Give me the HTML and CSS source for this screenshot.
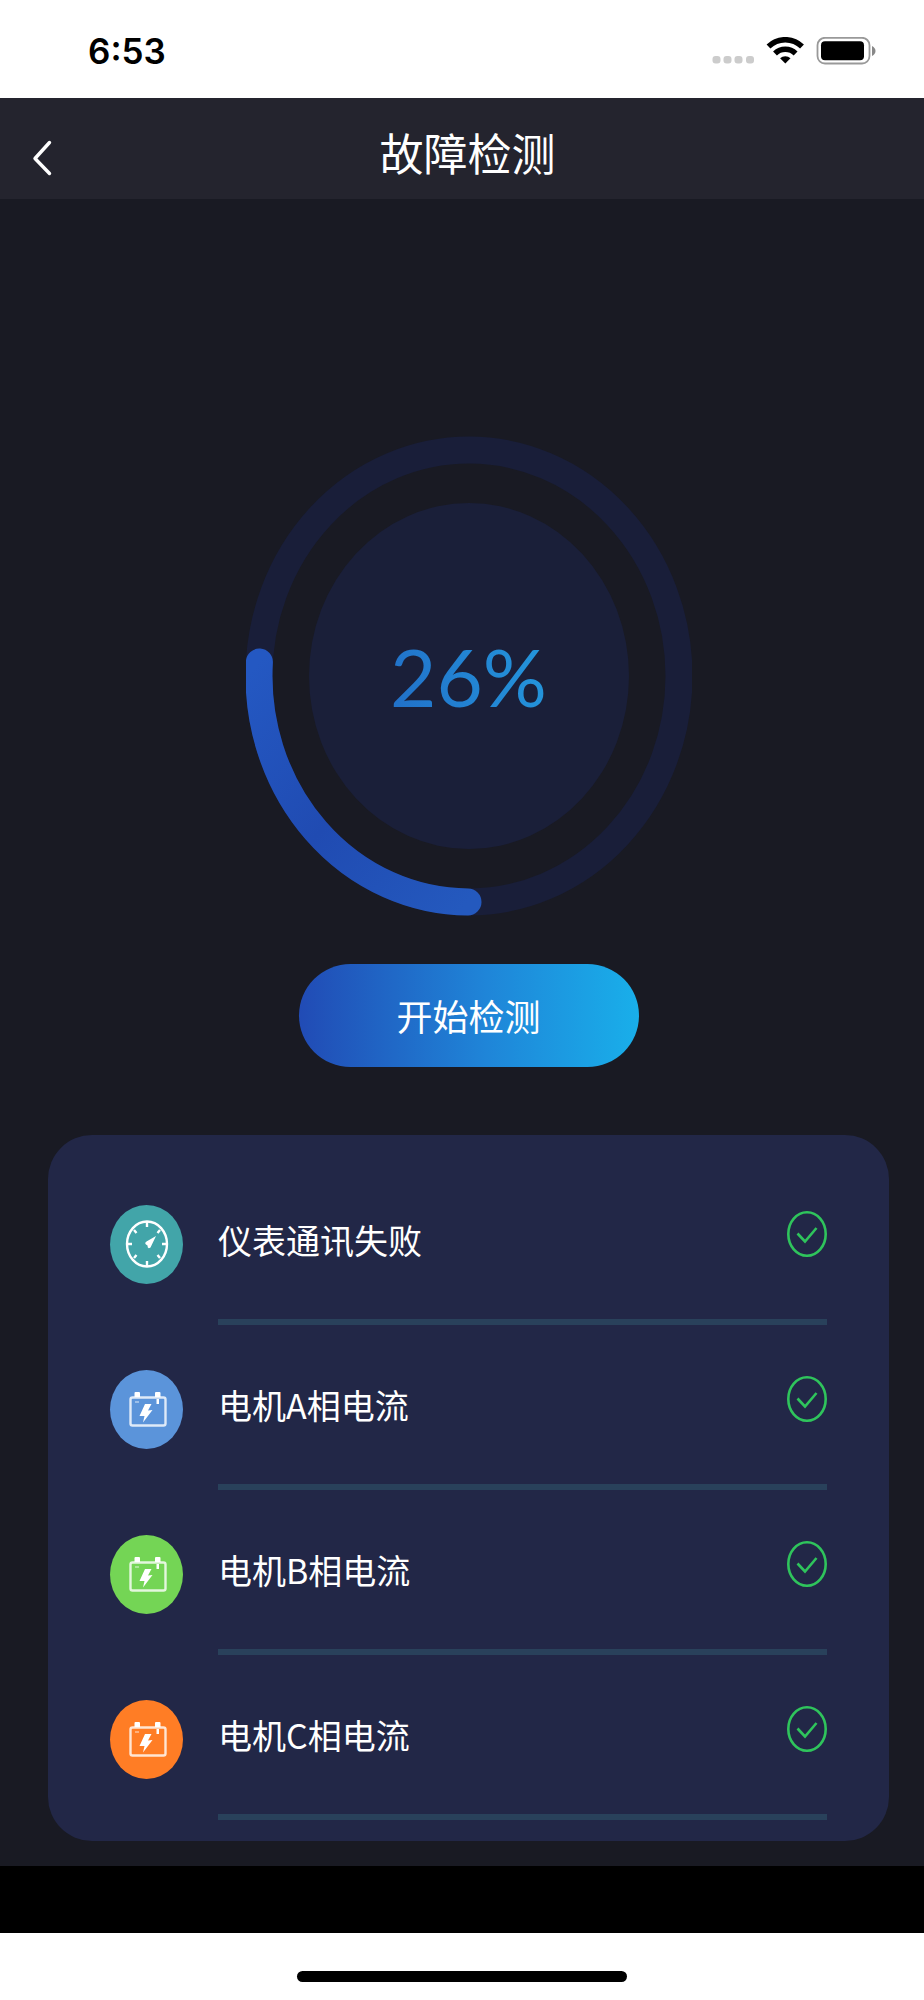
FILE: index.html
```html
<!DOCTYPE html>
<html lang="zh-CN">
<head>
<meta charset="utf-8">
<meta name="viewport" content="width=device-width, initial-scale=1">
<title>故障检测</title>
<link rel="stylesheet" href="styles.css">
</head>
<body>
<svg class="defs" aria-hidden="true">
  <symbol id="battery" viewBox="0 0 73 79">
    <rect x="20.500" y="27.500" width="35" height="28" rx="2" fill="none" stroke="#fff" stroke-opacity=".8" stroke-width="2.400"/>
    <path d="M24.500 27v-4q0-1 1-1h3.500q1 0 1 1v4zM45 27v-4q0-1 1-1h3.500q1 0 1 1v4zM46.500 29h2.500v5h-2.500z" fill="#fff"/>
    <path d="M25 31h4v2h-4z" fill="#fff" fill-opacity=".4"/>
    <path d="M35 34h6.500l-3.500 6.500 4.500-.5-9.500 12.500 1.500-6.500h-5z" fill="#fff"/>
  </symbol>
  <symbol id="check" viewBox="0 0 40 46">
    <ellipse cx="20" cy="23" rx="18.700" ry="21.700" fill="none" stroke="#2fc45c" stroke-width="2.600"/>
    <path d="M10.500 22.500l7.500 8L29.500 17" fill="none" stroke="#2fc45c" stroke-width="2.600"/>
  </symbol>
</svg>

<div class="status">
  <span class="time">6:53</span>
  <svg class="status-icons" viewBox="0 0 164 28" aria-hidden="true">
    <g fill="#ccc">
      <rect x="0.500" y="19" width="8" height="7.500" rx="3"/>
      <rect x="11.500" y="19" width="8" height="7.500" rx="3"/>
      <rect x="22.500" y="19" width="8" height="7.500" rx="3"/>
      <rect x="34" y="19" width="8" height="7.500" rx="3"/>
    </g>
    <g fill="none" stroke="#000" stroke-width="5.500">
      <path d="M56.500 9.500a24 24 0 0 1 33.500 0"/>
      <path d="M63 16.500a14.700 14.700 0 0 1 20.600 0"/>
    </g>
    <path d="M73.300 26.500l-5.200-5.200a7.500 7.500 0 0 1 10.400 0z"/>
    <rect x="105.500" y="0.800" width="52" height="25.700" rx="7.500" fill="none" stroke="#999" stroke-width="1.800"/>
    <rect x="109" y="4.300" width="43" height="19" rx="4"/>
    <path d="M160 9q3.500 2 3.500 5t-3.500 5z" fill="#888"/>
  </svg>
</div>

<header class="header">
  <button class="back" type="button" aria-label="返回">
    <svg viewBox="0 0 18 34" aria-hidden="true"><path d="M16.500 1.500L2 17.500l14.500 15" fill="none" stroke="#fff" stroke-width="3.400" stroke-linecap="round" stroke-linejoin="round"/></svg>
  </button>
  <h1 class="title">故障检测</h1>
</header>

<main class="main">
  <div class="gauge">
    <svg class="ring" viewBox="0 0 446 480" aria-hidden="true">
      <defs>
        <linearGradient id="arc" x1="0" y1="0" x2="1" y2="1">
          <stop offset="0" stop-color="#2458c2"/>
          <stop offset=".5" stop-color="#204bb2"/>
          <stop offset="1" stop-color="#2459be"/>
        </linearGradient>
      </defs>
      <ellipse cx="223" cy="240" rx="210" ry="226" fill="none" stroke="#191e39" stroke-width="27"/>
      <ellipse cx="223" cy="240" rx="160" ry="173" fill="#1a1f39"/>
      <path d="M13.400 226A210 226 0 0 0 222 466" fill="none" stroke="url(#arc)" stroke-width="27" stroke-linecap="round"/>
    </svg>
    <span class="percent">26%</span>
  </div>

  <button class="start" type="button">开始检测</button>

  <ul class="card">
    <li class="row">
      <svg class="icon teal" viewBox="0 0 73 79" aria-hidden="true">
        <ellipse cx="37" cy="39" rx="20" ry="22.500" fill="none" stroke="#fff" stroke-width="2.400"/>
        <path d="M37 17v5M37 56v5M17 39h5M52 39h5M24 25l2.500 3M50 25l-2.500 3M24 53l2.500-3M50 53l-2.500-3" stroke="#fff" stroke-width="2.400"/>
        <path d="M46 31l-5.500 11.500q-3 2-3-2-4-2-1-4z" fill="#fff"/>
      </svg>
      <div class="body"><span class="name">仪表通讯失败</span><svg class="check" role="img" aria-label="正常"><use href="#check"/></svg></div>
    </li>
    <li class="row">
      <svg class="icon blue" aria-hidden="true"><use href="#battery"/></svg>
      <div class="body"><span class="name">电机A相电流</span><svg class="check" role="img" aria-label="正常"><use href="#check"/></svg></div>
    </li>
    <li class="row">
      <svg class="icon green" aria-hidden="true"><use href="#battery"/></svg>
      <div class="body"><span class="name">电机B相电流</span><svg class="check" role="img" aria-label="正常"><use href="#check"/></svg></div>
    </li>
    <li class="row">
      <svg class="icon orange" aria-hidden="true"><use href="#battery"/></svg>
      <div class="body"><span class="name">电机C相电流</span><svg class="check" role="img" aria-label="正常"><use href="#check"/></svg></div>
    </li>
  </ul>
</main>

<div class="band"></div>
<footer class="home"><div class="home-bar"></div></footer>
</body>
</html>
```

FILE: styles.css
```css
* {
  box-sizing: border-box;
}

body {
  margin: 0;
  min-height: 100vh;
  display: flex;
  flex-direction: column;
  background: #fff;
  color: #fff;
  font-family: "Noto Sans CJK SC", "Noto Sans", sans-serif;
}

.defs {
  display: none;
}

button {
  border: 0;
  padding: 0;
  color: inherit;
  font-family: inherit;
  cursor: pointer;
}

.status {
  display: flex;
  align-items: center;
  justify-content: space-between;
  padding: 28px 48px 24px 88px;
}

.time {
  color: #000;
  font: 600 35px/46px Inter, sans-serif;
}

.status-icons {
  width: 164px;
  height: 28px;
}

.header {
  display: grid;
  grid-template-columns: 51px 1fr 40px;
  height: 101px;
  background: #24242e;
}

.back {
  display: flex;
  align-items: center;
  justify-content: flex-end;
  padding-top: 22px;
  padding-bottom: 10px;
  background: none;
}

.back svg {
  width: 18px;
  height: 34px;
  overflow: visible;
}

.title {
  margin: 0;
  font-size: 44px;
  font-weight: 400;
  line-height: 108px;
  text-align: center;
}

.main {
  display: flex;
  flex-direction: column;
  align-items: center;
  padding: 237px 35px 25px 48px;
  background: #191a23;
}

.gauge {
  display: grid;
  place-items: center;
}

.gauge > * {
  grid-area: 1 / 1;
}

.ring {
  width: 446px;
  height: 480px;
}

.percent {
  font: 400 80px/100px Lato, sans-serif;
  background: linear-gradient(75deg, #216fc8, #2498dd);
  -webkit-background-clip: text;
  background-clip: text;
  color: transparent;
}

.start {
  width: 340px;
  height: 103px;
  margin-top: 48px;
  padding-bottom: 2px;
  border-radius: 52px;
  background: linear-gradient(90deg, #214bb5, #1f85d8 55%, #19afea);
  font-size: 36px;
}

.card {
  align-self: stretch;
  margin: 68px 0 0;
  padding: 25px 62px 21px;
  border-radius: 44px;
  background: #222747;
  list-style: none;
}

.row {
  display: flex;
  align-items: flex-start;
  gap: 35px;
}

.icon {
  flex: none;
  width: 73px;
  height: 79px;
  margin-top: 45px;
  border-radius: 50%;
}

.teal {
  background: #42a5a9;
}

.blue {
  background: #5b94da;
}

.green {
  background: #74d555;
}

.orange {
  background: #ff7d25;
}

.body {
  flex: 1;
  display: flex;
  justify-content: space-between;
  padding: 45px 0 44px;
  border-bottom: 6px solid #29415b;
}

.name {
  font-size: 34px;
  line-height: 70px;
}

.check {
  width: 40px;
  height: 46px;
  margin-top: 6px;
}

.band {
  height: 67px;
  background: #000;
}

.home {
  flex: 1;
  display: flex;
  justify-content: center;
  padding: 38px 0 18px;
}

.home-bar {
  width: 330px;
  height: 11px;
  border-radius: 6px;
  background: #000;
}
```
